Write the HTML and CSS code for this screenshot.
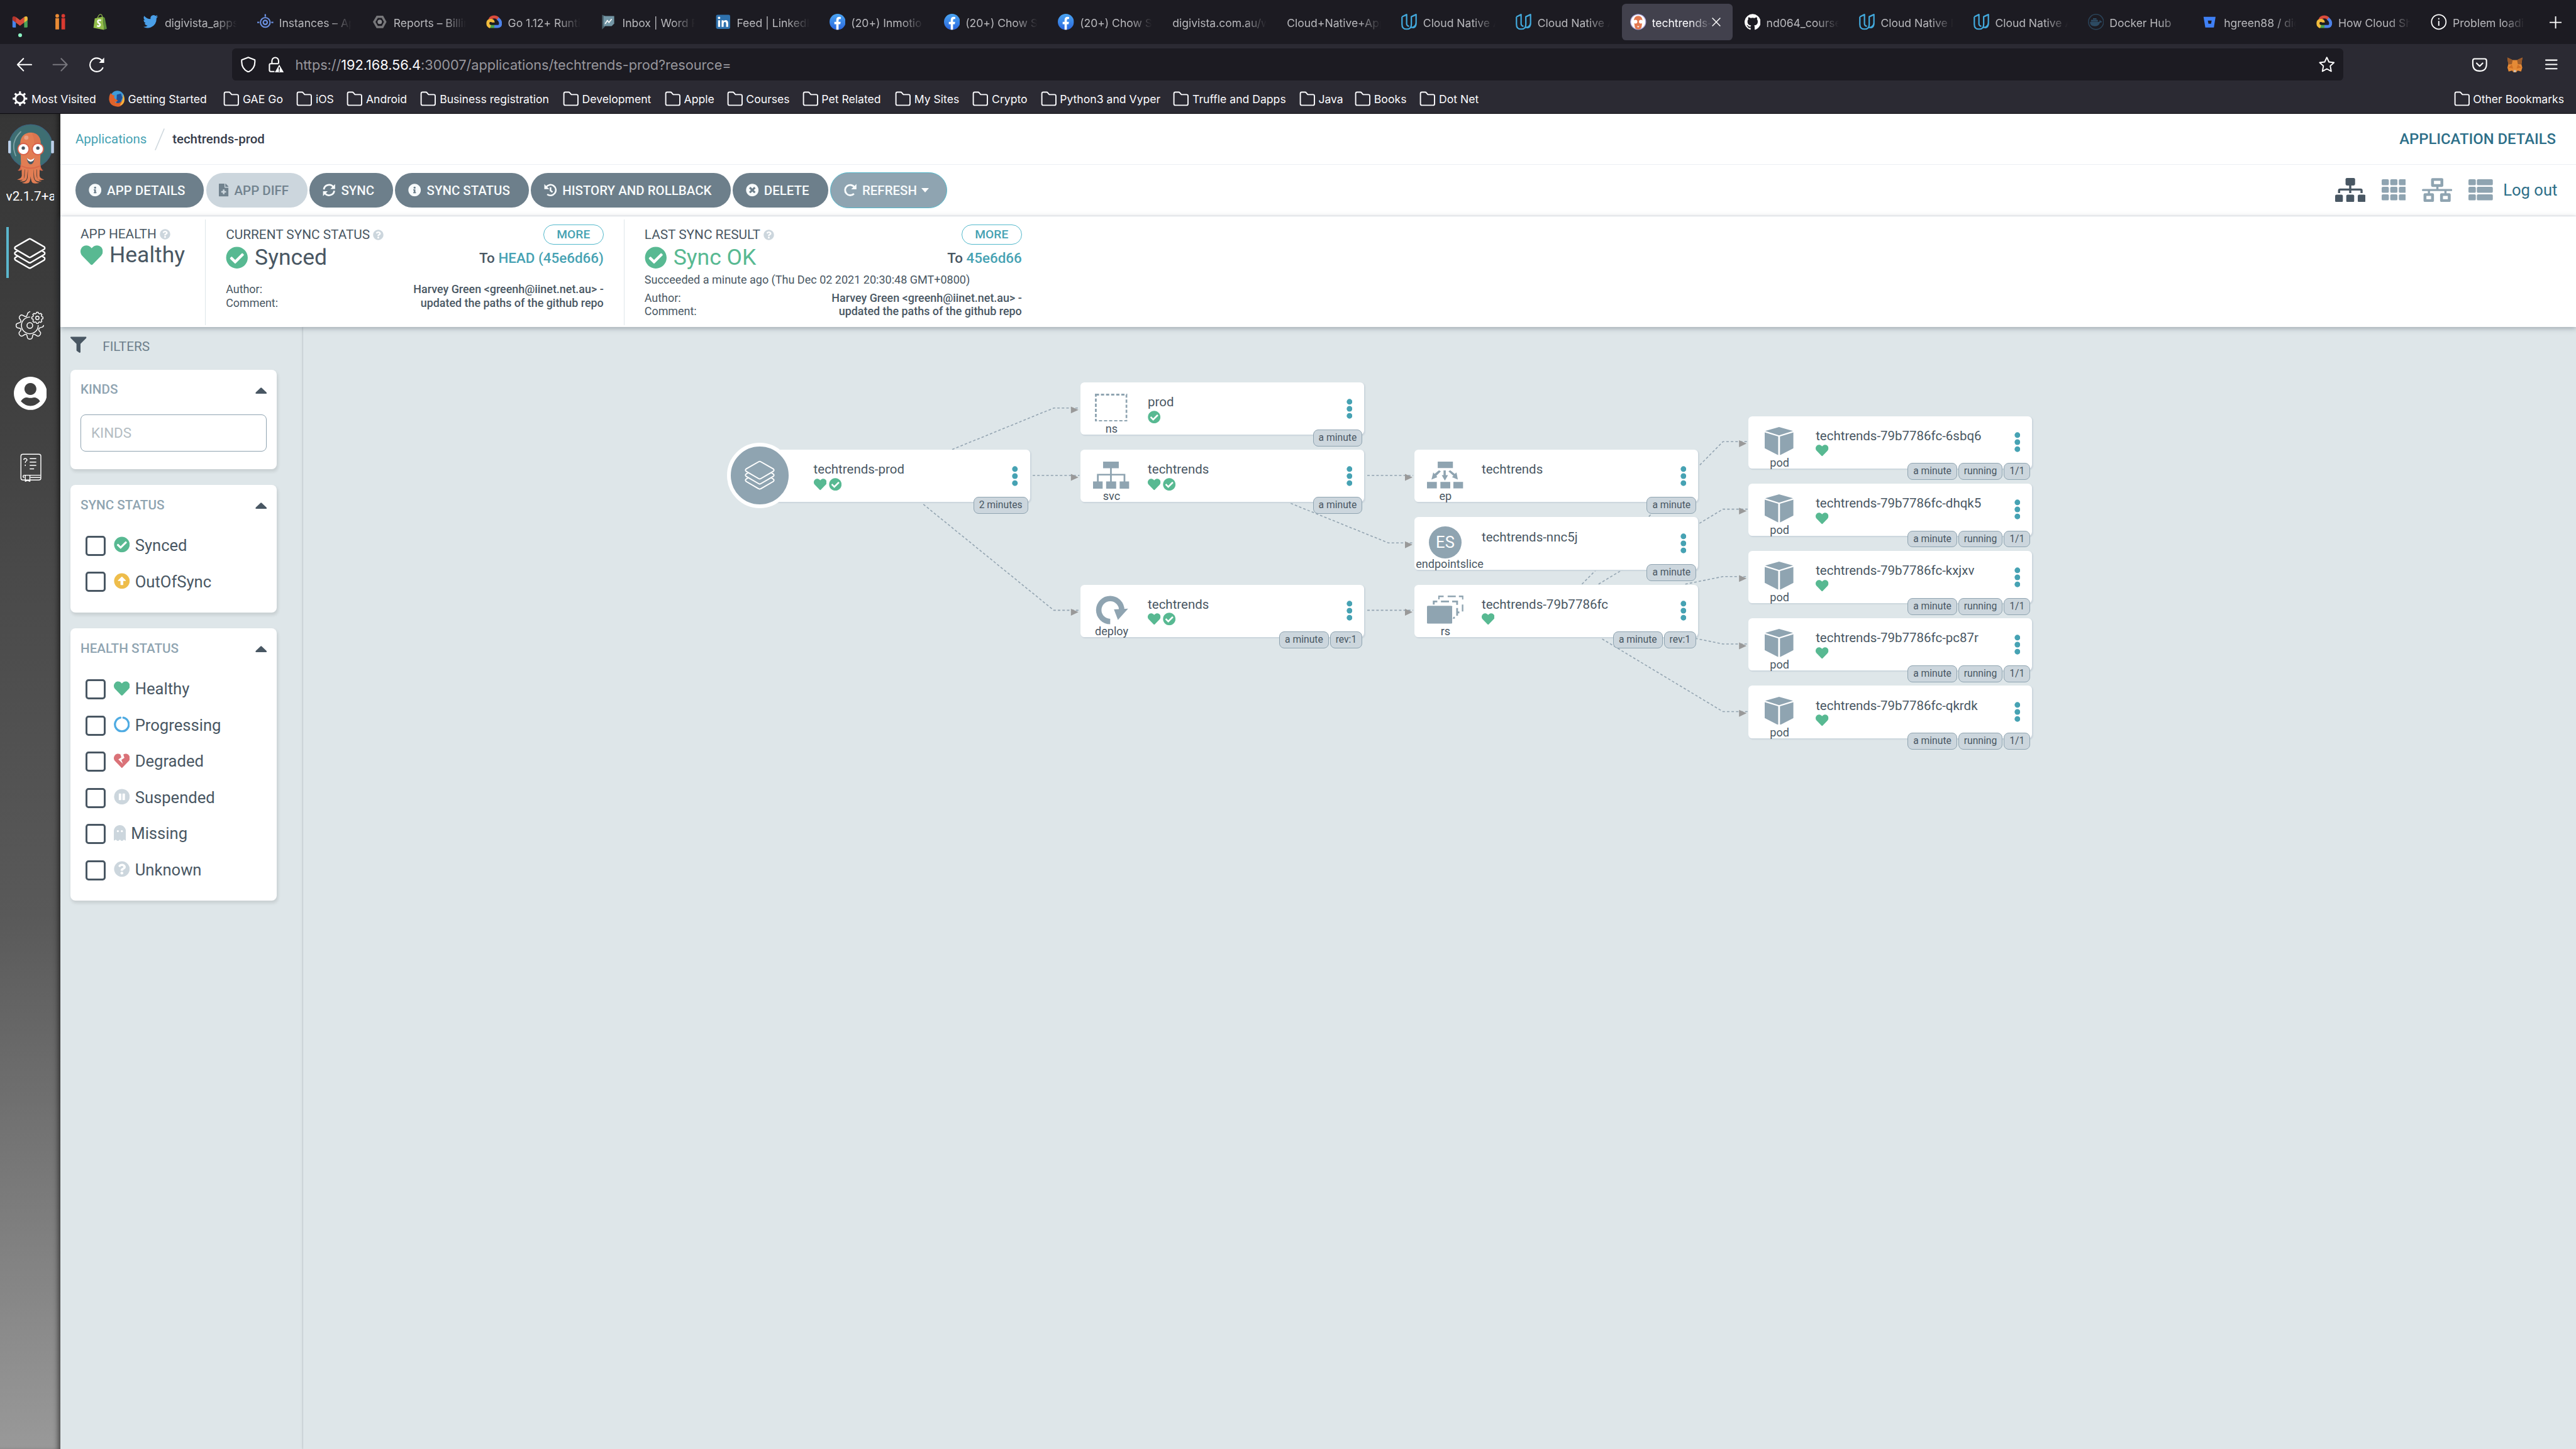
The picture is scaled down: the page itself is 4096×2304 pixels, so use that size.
FILE: index.html
```html
<!DOCTYPE html>
<html lang="en">
<head>
<meta charset="utf-8">
<title>techtrends-prod - Application Details Tree - Argo CD</title>
<link rel="stylesheet" href="styles.css">
</head>
<body>
<svg class="defs" width="0" height="0" aria-hidden="true">
  <defs>
    <linearGradient id="fbg" x1="0" y1="0" x2="0" y2="1"><stop offset="0" stop-color="#4aa5f2"/><stop offset="1" stop-color="#2b66dd"/></linearGradient>
    <symbol id="check" viewBox="0 0 512 512"><path d="M504 256c0 136.967-111.033 248-248 248S8 392.967 8 256 119.033 8 256 8s248 111.033 248 248zM227.314 387.314l184-184c6.248-6.248 6.248-16.379 0-22.627l-22.627-22.627c-6.248-6.249-16.379-6.249-22.628 0L216 308.118l-70.059-70.059c-6.248-6.248-16.379-6.248-22.628 0l-22.627 22.627c-6.248 6.248-6.248 16.379 0 22.627l104 104c6.249 6.249 16.379 6.249 22.628.001z"/></symbol>
    <symbol id="heart" viewBox="0 0 512 512"><path d="M462.3 62.6C407.5 15.9 326 24.3 275.7 76.2L256 96.5l-19.7-20.3C186.1 24.3 104.500 15.900 49.700 62.600c-62.800 53.600-66.100 149.800-9.900 207.900l193.500 199.800c12.500 12.900 32.800 12.900 45.300 0l193.500-199.800c56.300-58.100 53-154.300-9.800-207.900z"/></symbol>
    <symbol id="info" viewBox="0 0 512 512"><path d="M256 8C119.043 8 8 119.083 8 256c0 136.997 111.043 248 248 248s248-111.003 248-248C504 119.083 392.957 8 256 8zm0 110c23.196 0 42 18.804 42 42s-18.804 42-42 42-42-18.804-42-42 18.804-42 42-42zm56 254c0 6.627-5.373 12-12 12h-88c-6.627 0-12-5.373-12-12v-24c0-6.627 5.373-12 12-12h12v-64h-12c-6.627 0-12-5.373-12-12v-24c0-6.627 5.373-12 12-12h64c6.627 0 12 5.373 12 12v100h12c6.627 0 12 5.373 12 12v24z"/></symbol>
    <symbol id="times" viewBox="0 0 512 512"><path d="M256 8C119 8 8 119 8 256s111 248 248 248 248-111 248-248S393 8 256 8zm121.600 313.100c4.700 4.700 4.700 12.300 0 17L338 377.600c-4.700 4.700-12.300 4.700-17 0L256 312l-65.100 65.600c-4.700 4.700-12.300 4.700-17 0L134.400 338c-4.700-4.700-4.700-12.300 0-17l65.600-65-65.600-65.100c-4.700-4.700-4.700-12.300 0-17l39.600-39.600c4.700-4.700 12.300-4.700 17 0l65 65.700 65.100-65.600c4.700-4.700 12.300-4.700 17 0l39.600 39.600c4.700 4.700 4.700 12.300 0 17L312 256l65.600 65.100z"/></symbol>
    <symbol id="question" viewBox="0 0 512 512"><path d="M504 256c0 136.997-111.043 248-248 248S8 392.997 8 256C8 119.083 119.043 8 256 8s248 111.083 248 248zM262.655 90c-54.497 0-89.255 22.957-116.549 63.758-3.536 5.286-2.353 12.415 2.715 16.258l34.699 26.310c5.205 3.947 12.621 3.008 16.665-2.122 17.864-22.658 30.113-35.797 57.303-35.797 20.429 0 45.698 13.148 45.698 32.958 0 14.976-12.363 22.667-32.534 33.976C247.128 238.528 216 254.941 216 296v4c0 6.627 5.373 12 12 12h56c6.627 0 12-5.373 12-12v-1.333c0-28.462 83.186-29.647 83.186-106.667 0-58.002-60.165-102-116.531-102zM256 338c-25.365 0-46 20.635-46 46 0 25.364 20.635 46 46 46s46-20.636 46-46c0-25.365-20.635-46-46-46z"/></symbol>
    <symbol id="up" viewBox="0 0 512 512"><path d="M8 256C8 119 119 8 256 8s248 111 248 248-111 248-248 248S8 393 8 256zm292 116V256h70.900c10.700 0 16.100-13 8.500-20.500L264.500 121.200c-4.700-4.700-12.200-4.700-16.900 0l-115 114.300c-7.600 7.600-2.200 20.500 8.500 20.500H212v116c0 6.600 5.400 12 12 12h64c6.600 0 12-5.400 12-12z"/></symbol>
    <symbol id="broken" viewBox="0 0 512 512"><path d="M473.700 73.800l-2.400-2.500c-46-47-118-51.700-169.600-14.800L336 159.900l-96 64 48 128-144-144 96-64-28.600-86.500C159.700 19.600 87 24 40.700 71.400l-2.400 2.400C-10.400 123.600-12.500 202.900 31 256l212.100 218.600c7.100 7.300 18.600 7.300 25.700 0L481 255.900c43.500-53 41.400-132.300-7.300-182.100z"/></symbol>
    <symbol id="pause" viewBox="0 0 512 512"><path fill-rule="evenodd" d="M256 8a248 248 0 1 0 .1 0zM158 168q0-12 12-12h56q12 0 12 12v184q0 12-12 12h-56q-12 0-12-12zM274 168q0-12 12-12h56q12 0 12 12v184q0 12-12 12h-56q-12 0-12-12z"/></symbol>
    <symbol id="ghost" viewBox="0 0 384 512"><path fill-rule="evenodd" d="M192 0C86 0 0 88 0 194v280c0 14 17 18 27 11l25-18c7-5 16-4 22 2l43 38c6 6 16 6 22 0l41-36c6-7 18-7 24 0l41 36c6 6 16 6 22 0l43-38c6-6 15-7 22-2l25 18c10 7 27 3 27-11V194C384 88 298 0 192 0zM128 160a32 32 0 1 0 .1 0zM256 160a32 32 0 1 0 .1 0z"/></symbol>
    <symbol id="spin" viewBox="0 0 512 512"><path fill="none" stroke="currentColor" stroke-width="66" stroke-linecap="round" d="M208 42A220 220 0 1 0 304 42"/></symbol>
    <symbol id="filter" viewBox="0 0 512 512"><path d="M487.976 0H24.028C2.710 0-8.047 25.866 7.058 40.971L192 225.941V432c0 7.831 3.821 15.170 10.237 19.662l80 55.980C298.020 518.690 320 507.493 320 487.980V225.941l184.947-184.970C520.021 25.896 509.338 0 487.976 0z"/></symbol>
    <symbol id="caret" viewBox="0 0 58 33"><path d="M4 33Q-3 30 3 24L25 3Q29-1 33 3L55 24Q61 30 54 33Z"/></symbol>
    <symbol id="file" viewBox="0 0 384 512"><path fill-rule="evenodd" d="M224 136V0H24C11 0 0 11 0 24v464c0 13 11 24 24 24h336c13 0 24-11 24-24V160H248c-13 0-24-11-24-24zM160 230h64v64h64v60h-64v66h-64v-66H96v-60h64zM384 122v6H256V0h6c6 0 12 3 17 7l98 98c4 4 7 11 7 17z"/></symbol>
    <symbol id="sync" viewBox="0 0 16 16"><path fill="none" stroke="currentColor" stroke-width="2.100" d="M1.500 7.200A6.600 6.600 0 0 1 13.600 4.600M14.500 8.800A6.600 6.600 0 0 1 2.400 11.400"/><path d="M15.500.6v6H9.600zM.5 15.400v-6h5.900z"/></symbol>
    <symbol id="redo" viewBox="0 0 16 16"><path fill="none" stroke="currentColor" stroke-width="2.200" d="M12.400 12.500A6.400 6.400 0 1 1 13 4.400"/><path d="M15.500.3v6.700H8.900z"/></symbol>
    <symbol id="history" viewBox="0 0 16 16"><path fill="none" stroke="currentColor" stroke-width="2" d="M2.600 4.400A6.600 6.600 0 1 1 4 13.200M8.100 4.400v4.200l2.500 2"/><path d="M.4.600v6.200h6.200z"/></symbol>
    <symbol id="layers" viewBox="85 728 190 188"><path class="layer-line" fill="none" stroke="currentColor" vector-effect="non-scaling-stroke" d="M173 737Q180 732 187 737L266 782Q274 790 266 797L187 843Q180 848 173 843L94 797Q86 790 94 782ZM107 806L94 814Q86 821 94 829L173 875Q180 880 187 875L266 829Q274 821 266 814L253 806M107 838L94 846Q86 853 94 861L173 907Q180 912 187 907L266 861Q274 853 266 846L253 838"/></symbol>
    <symbol id="folder" viewBox="0 0 16 16"><path fill="none" stroke="currentColor" stroke-width="1.200" stroke-linejoin="round" d="M2.500 1.600h3.200q.7 0 1.200.6L8.400 4h5.100q1.500 0 1.500 1.500v7.600q0 1.500-1.500 1.500h-11q-1.500 0-1.500-1.500v-10q0-1.500 1.500-1.500z"/></symbol>
    <symbol id="udacity" viewBox="0 0 16 16"><path fill="none" stroke="#42a9dc" stroke-width="1.400" stroke-linejoin="round" d="M.8 2.900L5.400.7v9.200q0 2 2.400 2.600M.8 2.900v7.600q0 4.800 4.700 4.800 4.600 0 4.600-4.800V2.900L14.800.7v8q0 2.800-2 4.100-2 1.400-4 .3M14.800.7v9q0 3.600-3.400 4.200"/></symbol>
    <symbol id="gcp" viewBox="0 0 16 16"><path fill="none" stroke="#d94b3c" stroke-width="3" d="M3.600 6Q4.500 3 8 3t4.400 3"/><path fill="none" stroke="#4d82ea" stroke-width="3" d="M11.500 4.800Q14.300 6.500 14.300 9.600T11 12.600H8"/><path fill="none" stroke="#4ca350" stroke-width="3" d="M8.200 12.600H4.800L3.200 12"/><path fill="none" stroke="#f0bb3d" stroke-width="3" d="M4.300 13Q1.700 12 1.700 9.300T4.900 6.500Q7 6.700 7 8.600"/></symbol>
    <symbol id="facebook" viewBox="0 0 16 16"><circle cx="8" cy="8" r="8" fill="url(#fbg)"/><path fill="#fff" d="M6.700 16v-5.700H4.800V8h1.900V6.200Q6.700 3 9.700 3q.9 0 1.500.2v2H10q-1 0-1 1.100V8h2.100l-.4 2.300H9V16z"/></symbol>
    <symbol id="ns" viewBox="0 0 32.300 28"><rect x=".9" y=".9" width="30.500" height="26.200" fill="none" stroke="currentColor" stroke-width="1.800" stroke-dasharray="3.200 1.860"/></symbol>
    <symbol id="svc" viewBox="898 516 83 140" preserveAspectRatio="none"><path d="M921 516h36v34h-16v30h31v39h-4v-31h-27v31h-4v-31h-26v31h-4v-39h30v-30h-16zM898 619h22v37h-22zM928 619h23v37h-23zM959 619h22v37h-22z"/></symbol>
    <symbol id="deploy" viewBox="0 0 33 28.700"><path fill="none" stroke="currentColor" stroke-width="5.400" d="M15.200 25.800A11.400 11.400 0 1 1 26.600 14.600"/><path d="M18.900 13.800L33 13 22.900 24.200z"/></symbol>
    <symbol id="ep" viewBox="153 278 81 116" preserveAspectRatio="none"><path d="M177 278h34v28h-34zM153 365h22v29h-22zM183 365h22v29h-22zM212 365h22v29h-22zM190 316h5v20h5l-7 24-7-24h4zM180 315l4 5-10 19 2 6-13 10 4-30 3 6zM205 315l-4 5 11 19-3 6 13 10-3-30-4 6z"/></symbol>
    <symbol id="rs" viewBox="153 858 81 122" preserveAspectRatio="none"><rect x="153" y="902" width="56" height="78" rx="3"/><path d="M178 858h12v7h-9v9h-3zM199 858h18v7h-18zM224 858h10v17h-3v-10h-7zM230.500 897h3.500v30h-3.500zM166 880h10v7h-6v10h-4zM184 880h18v7h-18zM209 880h13v18h-4v-11h-9zM218 912h4v15h3v8h-3v10h-4zM212 950h3v8h-5z"/></symbol>
    <symbol id="pod" viewBox="905 128 64 122" preserveAspectRatio="none"><path d="M937 128l31 17-31 19-31-19zM905 151l30 18v81l-30-30zM969 151l-30 18v81l30-30z"/></symbol>
    <symbol id="dots" viewBox="0 0 6 20"><circle cx="3" cy="3" r="2.800"/><circle cx="3" cy="10" r="2.800"/><circle cx="3" cy="17" r="2.800"/></symbol>
  </defs>
</svg>

<header class="browser">
  <div class="tabs">
    <div class="pin"><svg class="fav" viewBox="0 0 16 16"><path fill="#4684ea" d="M.5 3.500l3.400 2.600v7.500H1.500q-1 0-1-1z"/><path fill="#4ba357" d="M15.500 3.500l-3.400 2.600v7.500h2.400q1 0 1-1z"/><path fill="#f0bb3d" d="M12.100 3.200q3.400-1.800 3.400 1.200v1.800l-3.400 2.600z"/><path fill="#b5342b" d="M.5 4.400q0-3 3.400-1.200v5.600L.5 6.200z"/><path fill="#d94b3c" d="M3.900 3.200L8 6.300l4.100-3.100v5.600L8 11.900 3.900 8.800z"/></svg><i class="notice"></i></div>
    <div class="pin"><svg class="fav" viewBox="0 0 16 16"><g fill="#ea8b35"><circle cx="5" cy="2" r="1.800"/><rect x="3.200" y="4.300" width="3.600" height="11.200"/></g><g fill="#d93a30"><circle cx="11" cy="2" r="1.800"/><rect x="9.200" y="4.300" width="3.600" height="11.200"/></g></svg></div>
    <div class="pin"><svg class="fav" viewBox="0 0 16 16"><path fill="none" stroke="#8bb44a" stroke-width=".8" d="M4.800 5Q6 .6 8 .6T9.600 4"/><path fill="#93bd4b" d="M2.300 4.500l8.200-1.700 1 13.100L1 13.900z"/><path fill="#5f8f3b" d="M10.500 2.800l1.800 1.200 2 10.800-2.800 1z"/><path fill="none" stroke="#fff" stroke-width="1.600" d="M8.600 6.600Q5.300 5.600 5.300 7.700q0 1.200 1.300 1.800 1.200.7.900 1.900-.5 1.600-3 .4"/></svg></div>
    <div class="tab"><svg class="fav" viewBox="0 0 16 16"><path fill="#4a9fe8" d="M.6 13q2.700.1 4.200-1.300-2.400-.3-3-2.300h1.300Q.8 8.500.9 6l1.300.4Q.1 4.400 1.400 2q2.500 3 6.300 3.200Q7.300 1.600 10.500 1.200q1.300 0 2.200.9L14.700 1.300 13.400 3l1.800-.4L13.700 4.200q0 6.900-5.700 9.200-3.900 1.400-7.400-.4z"/></svg><span>digivista_apps</span></div>
    <div class="tab"><svg class="fav" viewBox="0 0 16 16"><g fill="none" stroke="#6b90e0"><circle cx="8" cy="8.500" r="4.800" stroke-width="1.300"/><circle cx="8" cy="8.500" r="2" stroke-width="1.400"/><path stroke-width="1.400" d="M0 8.500h2M14 8.500h2M8 .3v2.500"/></g></svg><span>Instances – Ap</span></div>
    <div class="tab"><svg class="fav" viewBox="0 0 16 16"><path fill="none" stroke="#77777a" stroke-width="2.200" d="M5.500 3h5.200l2.800 5-2.800 5.200H5.500L2.500 8z"/><circle cx="8" cy="8" r="2.200" fill="#8a8a8d"/></svg><span>Reports – Billin</span></div>
    <div class="tab"><svg class="fav"><use href="#gcp"/></svg><span>Go 1.12+ Runti</span></div>
    <div class="tab"><svg class="fav" viewBox="0 0 16 16"><path fill="#4b636e" d="M1.500 1l3 1v10.500l-3 3z"/><path fill="#7396a5" d="M3 2.200h10.500v7.500L11 12.200H3z"/><path fill="none" stroke="#fff" d="M4.500 10l2.200-3.400 1.600 2L11 5.200"/></svg><span>Inbox | Word F</span></div>
    <div class="tab"><svg class="fav" viewBox="0 0 16 16"><rect x="1" y="1" width="14" height="14" rx="1.500" fill="#2f72ae"/><path fill="#fff" d="M3 6.400h2V13H3zM6.500 6.400h1.900v.9q.7-1.100 2.100-1.100 2.500 0 2.500 3V13h-2V9.700q0-1.700-1.200-1.700T8.500 9.700V13h-2z"/><circle cx="4" cy="4" r="1.200" fill="#fff"/></svg><span>Feed | LinkedI</span></div>
    <div class="tab"><svg class="fav"><use href="#facebook"/></svg><span>(20+) Inmotio</span></div>
    <div class="tab"><svg class="fav"><use href="#facebook"/></svg><span>(20+) Chow S</span></div>
    <div class="tab"><svg class="fav"><use href="#facebook"/></svg><span>(20+) Chow S</span></div>
    <div class="tab"><span>digivista.com.au/w</span></div>
    <div class="tab"><span>Cloud+Native+App</span></div>
    <div class="tab"><svg class="fav"><use href="#udacity"/></svg><span>Cloud Native A</span></div>
    <div class="tab"><svg class="fav"><use href="#udacity"/></svg><span>Cloud Native A</span></div>
    <div class="tab active"><svg class="fav" viewBox="0 0 16 16"><circle cx="8" cy="8" r="7.500" fill="#fff" stroke="#a9a2d8" stroke-width=".8"/><path fill="#e2774f" d="M3.800 7Q3.800 2 8 2t4.200 5l-.8 6q-.6 2.500-3.400 2.500T4.600 13z"/><circle cx="5.300" cy="7.800" r="1.900" fill="#fff"/><circle cx="10.700" cy="7.800" r="1.900" fill="#fff"/><circle cx="5.300" cy="7.800" r=".7"/><circle cx="10.700" cy="7.800" r=".7"/><path d="M6.800 12.200h2.400L8 13.800z"/></svg><span>techtrends-</span><svg class="close" viewBox="0 0 10 10"><path fill="none" stroke="#fff" stroke-width=".9" d="M1 1l8 8M9 1L1 9"/></svg></div>
    <div class="tab"><svg class="fav" viewBox="0 0 16 16"><path fill="#fff" d="M8 .2a8 8 0 0 0-2.500 15.600c.4 0 .5-.2.500-.4v-1.500c-2 .4-2.600-.6-2.800-1.100-.1-.3-.5-.9-.8-1.200-.3-.1-.7-.5 0-.5.600 0 1.100.6 1.200.8.700 1.200 1.900.9 2.400.7 0-.5.300-.9.500-1.100-1.800-.2-3.600-.9-3.600-3.900 0-.9.300-1.600.8-2.100-.1-.2-.4-1 .1-2.100 0 0 .7-.2 2.200.8a7.500 7.500 0 0 1 4 0c1.500-1 2.200-.8 2.200-.8.500 1.100.2 1.900.1 2.100.5.500.8 1.200.8 2.100 0 3.100-1.900 3.700-3.600 3.900.300.300.500.800.500 1.500v2.400c0 .2.200.5.500.4A8 8 0 0 0 8 .2z"/></svg><span>nd064_course</span></div>
    <div class="tab"><svg class="fav"><use href="#udacity"/></svg><span>Cloud Native F</span></div>
    <div class="tab"><svg class="fav"><use href="#udacity"/></svg><span>Cloud Native A</span></div>
    <div class="tab"><svg class="fav" viewBox="0 0 16 16"><circle cx="8" cy="8" r="7.500" fill="none" stroke="#2a4257"/><path fill="#2d4b63" d="M2 8h9.300q.4-1 .2-1.800Q12.800 6.500 13 7.500h1.300q-.8 1.300-2.300 1.200Q10.500 12.400 6.600 12.400 2 12.400 2 8zM3 6h6.800v1.600H3zM5 4.300h3.500v1.400H5z"/></svg><span>Docker Hub</span></div>
    <div class="tab"><svg class="fav" viewBox="0 0 16 16"><path fill="#3f80f5" d="M1.700 3h12l-1.700 10.600H3.500zM6 6.700l.6 3.200h2.600l.6-3.200z" fill-rule="evenodd"/></svg><span>hgreen88 / dig</span></div>
    <div class="tab"><svg class="fav"><use href="#gcp"/></svg><span>How Cloud Sh</span></div>
    <div class="tab"><svg class="fav" viewBox="0 0 16 16"><circle cx="8" cy="8" r="7.200" fill="none" stroke="#fff" stroke-width="1.100"/><path stroke="#fff" stroke-width="1.200" d="M8 7v4.800M8 4.200v1.500"/></svg><span>Problem loadin</span></div>
    <svg class="plus" viewBox="0 0 12 12"><path fill="none" stroke="#fff" stroke-width="1.200" d="M6 0v12M0 6h12"/></svg>
  </div>
  <div class="toolbar">
    <svg class="tb back" viewBox="0 0 16 16"><path fill="none" stroke="#fff" stroke-width="1.300" stroke-linecap="round" stroke-linejoin="round" d="M7 2L1.200 8 7 14M1.200 8H15"/></svg>
    <svg class="tb fwd" viewBox="0 0 16 16"><path fill="none" stroke="#77767d" stroke-width="1.300" stroke-linecap="round" stroke-linejoin="round" d="M9 2l5.800 6L9 14M14.800 8H1"/></svg>
    <svg class="tb" viewBox="0 0 16 16"><path fill="none" stroke="#fff" stroke-width="1.300" stroke-linecap="round" d="M14 11.200A6.700 6.700 0 1 1 12.800 3.500"/><path fill="#fff" d="M15.400 1v5.200h-5.200z"/></svg>
    <div class="url">
      <svg class="ui" viewBox="0 0 16 16"><path fill="none" stroke="#fff" stroke-width="1.300" stroke-linejoin="round" d="M8 .8l6.500 2.500q.8 8.700-6.500 12Q.7 12 1.500 3.300z"/></svg>
      <svg class="ui lock" viewBox="0 0 16 16"><path fill="none" stroke="#fff" stroke-width="1.300" d="M4 7V4.200a3.300 3.300 0 0 1 6.600 0V7M6.500 14.800H2.800q-1.300 0-1.300-1.300V8.300Q1.500 7 2.800 7h7.600"/><path fill="#fff" d="M11.300 8l4.500 7.800H6.800z"/><path stroke="#1c1b22" stroke-width="1.100" d="M11.300 10.500v2.600M11.300 13.800v1"/></svg>
      <span class="addr">https://<b>192.168.56.4</b>:30007/applications/techtrends-prod?resource=</span>
      <svg class="ui star" viewBox="0 0 16 16"><path fill="none" stroke="#fff" stroke-width="1.200" stroke-linejoin="round" d="M8 .8l2.100 4.500 5 .6-3.700 3.400 1 5.300L8 12.200l-4.400 2.400 1-5.300L.9 5.900l5-.6z"/></svg>
    </div>
    <svg class="tb pocket" viewBox="0 0 16 16"><path fill="none" stroke="#fff" stroke-width="1.300" stroke-linejoin="round" stroke-linecap="round" d="M3 2.200h10q1.800 0 1.800 1.800v3.500q0 6.800-6.800 6.800T1.200 7.500V4Q1.200 2.200 3 2.200zM5 6.500l3 3 3-3"/></svg>
    <svg class="tb fox" viewBox="0 0 16 16"><path fill="#e58a36" d="M.5 1l5.300 2.500h4.400L15.500 1l-1 6.500.9 3.500-1.200 3.800-3.400-.9-1.500 1.700H6.700l-1.500-1.700-3.400.9L.6 11l.9-3.500z"/><path fill="#9a5a2a" d="M.5 1l5.300 2.500-.8 4-3.500.3zM15.500 1l-5.300 2.500.8 4 3.500.3z"/><path fill="#d06f25" d="M5 8l1.300 3.800L1.500 11zM11 8l-1.300 3.800 4.800-.8z"/><path fill="#c9c1ba" d="M6.700 13.500h2.600l-.3 2H7z"/></svg>
    <svg class="tb menu" viewBox="0 0 16 16"><path stroke="#fff" stroke-width="1.300" stroke-linecap="round" d="M2.500 3.500h11M2.500 7.800h11M2.500 12h11"/></svg>
  </div>
  <div class="bookmarks">
    <div><svg viewBox="0 0 16 16"><circle cx="8" cy="8" r="4.500" fill="none" stroke="#fff" stroke-width="1.800"/><path stroke="#fff" stroke-width="2" d="M8 .8v3M8 12.200v3M.8 8h3M12.200 8h3M2.900 2.900L5 5M11 11l2.100 2.100M13.100 2.900L11 5M5 11l-2.100 2.100"/></svg><span>Most Visited</span></div>
    <div><svg viewBox="0 0 16 16"><circle cx="8.500" cy="7" r="6.800" fill="#3f9bd9"/><path fill="#1f4f94" d="M8 4l4-1 1.500 4-2 5-4 1z"/><path fill="#e0622a" d="M2 2.500Q3.500 5 6 4.800 4.500 6.500 6 8t3 1.500Q8 12 5.500 11 8 13.500 11 12t3.500-7Q17 10 14 13.500T7 15.800Q1 14.500.3 9.300 0 5 2 2.500z"/><path fill="#f3b63f" d="M14 3.500q2.500 4 1 8-2 3.500-4 3 3.500-4 3-11z"/></svg><span>Getting Started</span></div>
    <div><svg><use href="#folder"/></svg><span>GAE Go</span></div>
    <div><svg><use href="#folder"/></svg><span>iOS</span></div>
    <div><svg><use href="#folder"/></svg><span>Android</span></div>
    <div><svg><use href="#folder"/></svg><span>Business registration</span></div>
    <div><svg><use href="#folder"/></svg><span>Development</span></div>
    <div><svg><use href="#folder"/></svg><span>Apple</span></div>
    <div><svg><use href="#folder"/></svg><span>Courses</span></div>
    <div><svg><use href="#folder"/></svg><span>Pet Related</span></div>
    <div><svg><use href="#folder"/></svg><span>My Sites</span></div>
    <div><svg><use href="#folder"/></svg><span>Crypto</span></div>
    <div><svg><use href="#folder"/></svg><span>Python3 and Vyper</span></div>
    <div><svg><use href="#folder"/></svg><span>Truffle and Dapps</span></div>
    <div><svg><use href="#folder"/></svg><span>Java</span></div>
    <div><svg><use href="#folder"/></svg><span>Books</span></div>
    <div><svg><use href="#folder"/></svg><span>Dot Net</span></div>
    <div><svg><use href="#folder"/></svg><span>Other Bookmarks</span></div>
  </div>
</header>

<div class="app">
  <nav class="nav">
    <svg class="argo" viewBox="50 50 274 356">
      <circle cx="184" cy="183" r="129" fill="#3e6e72" stroke="#3d6480" stroke-width="5"/>
      <path fill="none" stroke="#7ea3a5" stroke-width="7" stroke-linecap="round" d="M125 97Q60 160 95 240"/>
      <rect x="50" y="150" width="16" height="75" rx="5" fill="#bcd0ea"/><rect x="306" y="150" width="17" height="75" rx="5" fill="#bcd0ea"/>
      <path fill="#d8694a" d="M124 290Q124 320 106 327 120 334 132 322L132 300zM243 290Q243 320 260 327 246 334 235 322L235 300z"/>
      <g fill="#e27d53">
        <path d="M122 170C120 128 148 102 184 102S246 128 244 170L240 310Q240 322 236 322H132Q128 322 127 310z"/>
        <path d="M130 315L131 360Q128 377 103 382 120 387 136 383 146 378 145 362L148 315zM150 315L148 362Q146 385 118 391 138 397 152 389 163 380 163 362L168 315zM168 315L166 370Q163 396 131 402 156 408 170 403 182 396 184 362 186 396 198 403 212 408 237 402 205 396 202 370L200 315zM200 315L205 362Q205 380 216 389 230 397 250 391 222 385 220 362L218 315zM220 315L223 362Q222 378 232 383 248 387 265 382 240 377 237 360L238 315z"/>
      </g>
      <path fill="#d9704c" d="M190 102Q244 108 244 170L240 215 205 180Q208 140 190 102z" opacity=".6"/>
      <path fill="none" stroke="#d9694a" stroke-width="7" d="M128 301Q184 328 240 301"/>
      <circle cx="158" cy="132" r="13" fill="#e9a084"/>
      <circle cx="141" cy="200" r="37" fill="#d8604a"/><circle cx="227" cy="200" r="37" fill="#d8604a"/>
      <circle cx="141" cy="200" r="30" fill="#fff"/><circle cx="227" cy="200" r="30" fill="#fff"/>
      <circle cx="140" cy="194" r="10"/><circle cx="227" cy="194" r="10"/>
      <path d="M161 253Q184 280 207 253 203 290 184 291 165 290 161 253z"/><path fill="#fff" d="M161 253Q184 277 207 253 203 274 184 276 166 274 161 253z"/>
    </svg>
    <div class="version">v2.1.7+a</div>
    <div class="navitem current"><svg class="layers"><use href="#layers"/></svg></div>
    <svg class="gears" viewBox="-88 -88 176 176"><g fill="none" stroke="#fff" stroke-width="5.500" stroke-linejoin="round" stroke-linecap="round"><circle r="17"/><path d="M50 0A50 50 0 1 1 0-50"/><path d="M82 0Q80 10 74 10L59.600 14Q50 22 54.200 30.100L64 42Q66 50 60 58 52 68 42 62L30.100 54.200Q20 50 17.100 59.600L14 74Q11 82 0 82-11 82-14 74L-17.100 59.600Q-20 50-30.100 54.200L-42 62Q-52 68-60 58-66 50-64 42L-54.200 30.100Q-50 22-59.600 17.100L-74 14Q-82 11-82 0-82-11-74-12L-59.600-17.100Q-50-22-54.200-30.100L-62-42Q-66-50-58-58-50-66-42-60L-30.100-54.200Q-20-50-17.100-59.600L-12-74Q-8-80 0-82"/></g><g fill="none" stroke="#fff" stroke-width="12" stroke-linejoin="round" transform="translate(45 -45) scale(.44)"><circle r="23"/><path d="M59.600-17.100L76-11.300V11.300L59.600 17.100 54.200 30.100 61.700 45.700 45.700 61.700 30.100 54.200 17.100 59.600 11.300 76H-11.300L-17.100 59.600-30.100 54.200-45.700 61.700-61.700 45.700-54.200 30.100-59.600 17.100-76 11.300V-11.300L-59.600-17.100-54.200-30.100-61.700-45.700-45.700-61.700-30.100-54.200-17.100-59.600-11.300-76H11.300L17.100-59.600 30.100-54.200 45.700-61.700 61.700-45.700 54.200-30.100z"/></g></svg>
    <svg class="user" viewBox="0 0 100 100"><path fill="#fff" fill-rule="evenodd" d="M50 0a50 50 0 1 0 .1 0zM50 19a18 18 0 1 1-.1 0zM21 74Q30 61 42 63 50 65 58 63 70 61 79 74 66 88 50 88T21 74z"/></svg>
    <svg class="book" viewBox="101 683 107 149" preserveAspectRatio="none"><g fill="none" stroke="#fff" stroke-width="4.500" stroke-linejoin="round"><rect x="105" y="687" width="100" height="134" rx="10"/><path d="M203 796H122Q116 796 116 802T122 808M153 808H203M127 796V828L138 823 150 828V796"/><path d="M149 710H182M149 728H182M149 745H182M149 763H171"/><path d="M119 716Q120 709 127 709T136 716Q136 720 131 723T127 732M127 741V748"/></g></svg>
  </nav>
  <main class="main">
    <div class="crumbs">
      <a>Applications</a>
      <svg class="slash" viewBox="0 0 10 22"><path stroke="#cfd8de" stroke-width="1" d="M9.500.3L.5 21.700"/></svg>
      <strong>techtrends-prod</strong>
      <h1>APPLICATION DETAILS</h1>
    </div>
    <div class="actions">
      <button class="btn"><svg><use href="#info"/></svg><span>APP DETAILS</span></button>
      <button class="btn off"><svg class="narrow"><use href="#file"/></svg><span>APP DIFF</span></button>
      <button class="btn"><svg><use href="#sync"/></svg><span>SYNC</span></button>
      <button class="btn"><svg><use href="#info"/></svg><span>SYNC STATUS</span></button>
      <button class="btn"><svg><use href="#history"/></svg><span>HISTORY AND ROLLBACK</span></button>
      <button class="btn"><svg><use href="#times"/></svg><span>DELETE</span></button>
      <button class="btn focus"><svg><use href="#redo"/></svg><span>REFRESH</span><i class="down"></i></button>
      <div class="views">
        <svg class="wide on" viewBox="230 399 169 144" preserveAspectRatio="none"><rect x="288" y="399" width="53" height="45" rx="8"/><rect x="230" y="498" width="43" height="45" rx="8"/><rect x="292" y="498" width="44" height="45" rx="8"/><rect x="356" y="498" width="43" height="45" rx="8"/><path fill="none" stroke="currentColor" stroke-width="12" d="M314 440V489M252 489V474Q252 468 258 468H371Q377 468 377 474V489"/></svg>
        <svg class="sq" viewBox="487 408 136 126" preserveAspectRatio="none"><g id="thcol"><rect x="487" y="408" width="40" height="36" rx="7"/><rect x="487" y="453" width="40" height="36" rx="7"/><rect x="487" y="498" width="40" height="36" rx="7"/></g><use href="#thcol" x="48"/><use href="#thcol" x="96"/></svg>
        <svg class="wide" viewBox="711 399 169 144" preserveAspectRatio="none"><g fill="none" stroke="currentColor" stroke-width="16" stroke-linejoin="round"><path d="M770 408H822V444H770zM728 498H770V534H728zM820 498H863V534H820z"/><path stroke-width="12" stroke-linecap="round" d="M717 471H874M797 452V471M750 471V490M842 471V490"/></g></svg>
        <svg class="sq" viewBox="969 408 136 126" preserveAspectRatio="none"><rect x="969" y="408" width="41" height="36" rx="7"/><rect x="969" y="453" width="41" height="36" rx="7"/><rect x="969" y="498" width="41" height="36" rx="7"/><rect x="1016" y="408" width="89" height="36" rx="7"/><rect x="1016" y="453" width="89" height="36" rx="7"/><rect x="1016" y="498" width="89" height="36" rx="7"/></svg>
        <a class="logout">Log out</a>
      </div>
    </div>
    <section class="status">
      <div class="cell health">
        <div class="label">APP HEALTH<svg><use href="#question"/></svg></div>
        <div class="value"><svg class="green"><use href="#heart"/></svg><span>Healthy</span></div>
      </div>
      <div class="cell current-sync">
        <div class="row label"><span class="label">CURRENT SYNC STATUS<svg><use href="#question"/></svg></span><a class="more">MORE</a></div>
        <div class="row big"><div class="value"><svg class="green"><use href="#check"/></svg><span>Synced</span></div><div class="to">To <a>HEAD (45e6d66)</a></div></div>
        <div class="meta"><span>Author:</span><b>Harvey Green &lt;greenh@iinet.net.au&gt; -</b><span>Comment:</span><b>updated the paths of the github repo</b></div>
      </div>
      <div class="cell last-sync">
        <div class="row label"><span class="label">LAST SYNC RESULT<svg><use href="#question"/></svg></span><a class="more">MORE</a></div>
        <div class="row big"><div class="value ok"><svg class="green"><use href="#check"/></svg><span>Sync OK</span></div><div class="to">To <a>45e6d66</a></div></div>
        <div class="when">Succeeded a minute ago (Thu Dec 02 2021 20:30:48 GMT+0800)</div>
        <div class="meta"><span>Author:</span><b>Harvey Green &lt;greenh@iinet.net.au&gt; -</b><span>Comment:</span><b>updated the paths of the github repo</b></div>
      </div>
    </section>
    <div class="body">
      <aside class="filters">
        <div class="fhead"><svg><use href="#filter"/></svg><span>FILTERS</span></div>
        <div class="card kinds">
          <div class="chead"><span>KINDS</span><svg><use href="#caret"/></svg></div>
          <div class="input">KINDS</div>
        </div>
        <div class="card sync">
          <div class="chead"><span>SYNC STATUS</span><svg><use href="#caret"/></svg></div>
          <div class="opt"><i></i><svg class="green"><use href="#check"/></svg><span>Synced</span></div>
          <div class="opt"><i></i><svg class="yellow"><use href="#up"/></svg><span>OutOfSync</span></div>
        </div>
        <div class="card hstatus">
          <div class="chead"><span>HEALTH STATUS</span><svg><use href="#caret"/></svg></div>
          <div class="opt"><i></i><svg class="green"><use href="#heart"/></svg><span>Healthy</span></div>
          <div class="opt"><i></i><svg class="blue"><use href="#spin"/></svg><span>Progressing</span></div>
          <div class="opt"><i></i><svg class="red"><use href="#broken"/></svg><span>Degraded</span></div>
          <div class="opt"><i></i><svg class="grey"><use href="#pause"/></svg><span>Suspended</span></div>
          <div class="opt"><i></i><svg class="grey ghost"><use href="#ghost"/></svg><span>Missing</span></div>
          <div class="opt"><i></i><svg class="grey"><use href="#question"/></svg><span>Unknown</span></div>
        </div>
      </aside>
      <div class="canvas">
        <svg class="edges" viewBox="301 325 2259 1115">
          <g fill="none" stroke="#93a4b1" stroke-width="1" stroke-dasharray="2.500 2">
            <path d="M946 446.700L1047 405.500H1072.500M1026 472.500H1072.500M917.400 501.200L1047 606.500H1072.500M1358.500 472.500H1404M1282.400 500.200L1379.500 539.500H1404M1358.500 606.500H1404M1571.900 580.500L1712 438.900H1736.500M1588.400 580.500L1712 506H1736.500M1674.600 580.500L1712 573H1736.500M1680 633.500L1712 640H1736.500M1592 635L1712 707.200H1736.500"/>
          </g>
          <path fill="#999" d="M1064 404l7.500 3.300-7.500 3.500zM1064 471l7.500 3.300-7.500 3.500zM1064 605l7.500 3.300-7.500 3.500zM1396 471l7.500 3.300-7.500 3.500zM1396 538l7.500 3.300-7.500 3.500zM1396 605l7.500 3.300-7.500 3.500zM1728 437.500l7.500 3.300-7.500 3.500zM1728 504.500l7.500 3.300-7.500 3.500zM1728 571.500l7.500 3.300-7.500 3.500zM1728 638.500l7.500 3.300-7.500 3.500zM1728 705.500l7.500 3.300-7.500 3.500z"/>
        </svg>
        <div class="node root" style="left:440.500px;top:122px"><div class="disc"><svg><use href="#layers"/></svg></div><div class="name">techtrends-prod<p><svg><use href="#heart"/></svg><svg><use href="#check"/></svg></p></div><svg class="dots"><use href="#dots"/></svg><div class="tags"><span>2 minutes</span></div></div>
        <div class="node" style="left:772.700px;top:55px"><div class="kind"><svg class="k-ns"><use href="#ns"/></svg><span>ns</span></div><div class="name">prod<p><svg><use href="#check"/></svg></p></div><svg class="dots"><use href="#dots"/></svg><div class="tags"><span>a minute</span></div></div>
        <div class="node" style="left:772.700px;top:122px"><div class="kind"><svg class="k-svc"><use href="#svc"/></svg><span>svc</span></div><div class="name">techtrends<p><svg><use href="#heart"/></svg><svg><use href="#check"/></svg></p></div><svg class="dots"><use href="#dots"/></svg><div class="tags"><span>a minute</span></div></div>
        <div class="node" style="left:772.700px;top:256px"><div class="kind"><svg class="k-deploy"><use href="#deploy"/></svg><span>deploy</span></div><div class="name">techtrends<p><svg><use href="#heart"/></svg><svg><use href="#check"/></svg></p></div><svg class="dots"><use href="#dots"/></svg><div class="tags"><span>a minute</span><span>rev:1</span></div></div>
        <div class="node" style="left:1104.500px;top:122px"><div class="kind"><svg class="k-ep"><use href="#ep"/></svg><span>ep</span></div><div class="name">techtrends</div><svg class="dots"><use href="#dots"/></svg><div class="tags"><span>a minute</span></div></div>
        <div class="node" style="left:1104.500px;top:189px"><div class="kind"><div class="es">ES</div><span class="long">endpointslice</span></div><div class="name">techtrends-nnc5j</div><svg class="dots"><use href="#dots"/></svg><div class="tags"><span>a minute</span></div></div>
        <div class="node" style="left:1104.500px;top:256px"><div class="kind"><svg class="k-rs"><use href="#rs"/></svg><span>rs</span></div><div class="name">techtrends-79b7786fc<p><svg><use href="#heart"/></svg></p></div><svg class="dots"><use href="#dots"/></svg><div class="tags"><span>a minute</span><span>rev:1</span></div></div>
        <div class="node" style="left:1436.500px;top:88.500px"><div class="kind"><svg class="k-pod"><use href="#pod"/></svg><span>pod</span></div><div class="name">techtrends-79b7786fc-6sbq6<p><svg><use href="#heart"/></svg></p></div><svg class="dots"><use href="#dots"/></svg><div class="tags"><span>a minute</span><span>running</span><span>1/1</span></div></div>
        <div class="node" style="left:1436.500px;top:155.500px"><div class="kind"><svg class="k-pod"><use href="#pod"/></svg><span>pod</span></div><div class="name">techtrends-79b7786fc-dhqk5<p><svg><use href="#heart"/></svg></p></div><svg class="dots"><use href="#dots"/></svg><div class="tags"><span>a minute</span><span>running</span><span>1/1</span></div></div>
        <div class="node" style="left:1436.500px;top:222.500px"><div class="kind"><svg class="k-pod"><use href="#pod"/></svg><span>pod</span></div><div class="name">techtrends-79b7786fc-kxjxv<p><svg><use href="#heart"/></svg></p></div><svg class="dots"><use href="#dots"/></svg><div class="tags"><span>a minute</span><span>running</span><span>1/1</span></div></div>
        <div class="node" style="left:1436.500px;top:289.500px"><div class="kind"><svg class="k-pod"><use href="#pod"/></svg><span>pod</span></div><div class="name">techtrends-79b7786fc-pc87r<p><svg><use href="#heart"/></svg></p></div><svg class="dots"><use href="#dots"/></svg><div class="tags"><span>a minute</span><span>running</span><span>1/1</span></div></div>
        <div class="node" style="left:1436.500px;top:356.500px"><div class="kind"><svg class="k-pod"><use href="#pod"/></svg><span>pod</span></div><div class="name">techtrends-79b7786fc-qkrdk<p><svg><use href="#heart"/></svg></p></div><svg class="dots"><use href="#dots"/></svg><div class="tags"><span>a minute</span><span>running</span><span>1/1</span></div></div>
      </div>
    </div>
  </main>
</div>
</body>
</html>
```
FILE: styles.css
```css
* { box-sizing: border-box; }
html { overflow: hidden; background: #dee6e9; }
body {
  margin: 0;
  zoom: 1.6;
  width: 2560px;
  height: 1440px;
  overflow: hidden;
  display: flex;
  flex-direction: column;
  font-family: Roboto, "Liberation Sans", sans-serif;
  color: #495763;
}
svg { display: block; flex: none; fill: currentColor; }
.defs { position: absolute; }
.layer-line { stroke-width: var(--sw); }

/* Browser chrome */
.browser {
  flex: none;
  height: 113px;
  background: #2b2a33;
  border-bottom: 1px solid #0c0b10;
  font-family: Inter, "Liberation Sans", sans-serif;
  color: #fbfbfe;
}
.tabs { display: flex; height: 44px; background: #1c1b22; padding-left: 0; align-items: center; }
.pin { width: 40px; height: 44px; padding: 14px 0 0 12px; position: relative; }
.pin:nth-child(3) { width: 52px; }
.fav { width: 16px; height: 16px; }
.notice { position: absolute; left: 18px; top: 33px; width: 4px; height: 4px; border-radius: 50%; background: #8cf5c4; }
.tab {
  width: 109.710px;
  height: 36px;
  margin: 0 2px;
  padding: 0 8px;
  border-radius: 4px;
  display: flex;
  align-items: center;
  gap: 5.700px;
  color: #b8b8bc;
  font-size: 11px;
}
.tab span {
  flex: 1;
  min-width: 0;
  overflow: hidden;
  white-space: nowrap;
  line-height: 20px;
  padding-top: 2px;
  letter-spacing: -.03px;
  -webkit-mask-image: linear-gradient(to left, transparent, #000 22px);
  mask-image: linear-gradient(to left, transparent, #000 22px);
}
.tab.active { background: #42414d; color: #fbfbfe; padding-right: 11px; }
.tab.active span { margin-right: -6px; }
.close { width: 10px; height: 10px; }
.plus { width: 12px; height: 12px; margin-left: 14px; margin-top: 1px; }

.toolbar { display: flex; align-items: center; height: 40px; padding: 0 16px; }
.tb { width: 16px; height: 16px; margin-right: 20px; }
.url { width: 2098px; height: 32px; margin-left: 106.500px; background: #1c1b22; border-radius: 4px; display: flex; align-items: center; padding: 0 8px; }
.ui { width: 16px; height: 16px; }
.lock { margin-left: 11.500px; }
.addr { margin-left: 11.500px; font-size: 13.600px; line-height: 20px; color: #97969c; flex: 1; letter-spacing: -.04px; padding-top: 1.200px; }
.addr b { font-weight: 400; color: #fbfbfe; }
.pocket { margin-left: 128px; margin-right: 19px; }
.menu { margin-right: 0; }

.bookmarks {
  display: grid;
  height: 28px;
  padding-left: 12px;
  grid-template-columns: 96px 114px 72.500px 50px 73.300px 141.500px 101.300px 61.700px 75px 92.100px 77.100px 67.600px 131.800px 125.200px 55.300px 64.500px 1027.600px auto;
  font-size: 11px;
}
.bookmarks div { display: flex; align-items: center; gap: 3.200px; white-space: nowrap; }
.bookmarks svg { width: 16px; height: 16px; }
.bookmarks span { line-height: 20px; padding-top: 1px; }

/* Application shell */
.app { flex: 1; display: flex; min-height: 0; }
.nav {
  width: 60px;
  flex: none;
  background: linear-gradient(to bottom, #363636 0%, #3f3f3f 20%, #4b4b4b 37%, #595959 60%, #999 100%);
  box-shadow: inset -5px 0 5px -3px rgba(0, 0, 0, .55);
  display: flex;
  flex-direction: column;
  align-items: flex-start;
}
.argo { width: 45.700px; height: 59.300px; margin: 10.300px 0 0 8.300px; }
.version { width: 48px; margin: .6px 0 0 6px; height: 26.400px; line-height: 24px; font-size: 13px; color: #fff; overflow: hidden; white-space: nowrap; }
.navitem { width: 54px; height: 51px; margin: 15.900px 0 0 6px; border-left: 3px solid #5bb6cc; padding: 11px 0 0 5.200px; }
.layers { width: 31.700px; height: 31.300px; color: #fff; --sw: 1.500px; }
.gears { width: 29.300px; height: 29.300px; margin: 32px 0 0 15.300px; }
.user { width: 33px; height: 33px; margin: 36.500px 0 0 13.500px; }
.book { width: 21.200px; height: 28.500px; margin: 43.300px 0 0 20.200px; }

.main { flex: 1; min-width: 0; display: flex; flex-direction: column; background: #fff; }
.crumbs { display: flex; align-items: center; height: 51px; flex: none; border-bottom: 1px solid #eceff3; padding: 0 20px 0 15px; font-size: 12.800px; line-height: 20px; }
.crumbs a { color: #46a2b3; }
.slash { width: 10px; height: 22px; margin: 0 7.500px 0 8px; }
.crumbs strong { font-weight: 500; color: #363c4a; }
.crumbs h1 { margin: 0 0 0 auto; font-size: 14.900px; font-weight: 500; color: #2d6f89; }

.actions { display: flex; align-items: center; gap: 2px; height: 51px; flex: none; border-bottom: 1px solid #eceff3; padding: 0 18.500px 0 15px; }
.btn {
  height: 34px;
  border: 0;
  border-radius: 17px;
  background: #6d7f8b;
  color: #f8fbfc;
  font: 500 12.800px/20px Roboto, sans-serif;
  display: flex;
  align-items: center;
  gap: 5.500px;
  padding: 0 18.800px 0 13px;
  white-space: nowrap;
}
.btn svg { width: 12.800px; height: 12.800px; }
.btn svg.narrow { width: 9.600px; }
.btn.off { background: #ccd6dd; color: #71828e; }
.btn.focus { height: 36px; border: 1px solid #54b9cc; border-radius: 18px; background: #8fa4b1; padding: 0 17.500px 0 13px; }
.down { width: 0; height: 0; border: 4px solid transparent; border-top: 4.500px solid #fff; border-bottom: 0; margin-left: -1px; }
.views { margin-left: auto; display: flex; align-items: center; gap: 16px; color: #8fa4b1; margin-top: -1px; }
.wide { width: 30.200px; height: 24px; }
.sq { width: 24.200px; height: 21px; }
.on { color: #495763; }
.logout { font-size: 16px; line-height: 24px; color: #2d6f89; margin-left: -5.600px; }

.status { display: flex; height: 110px; flex: none; padding: 3px 0 2px; box-shadow: 0 1px 5px rgba(73, 87, 99, .45); position: relative; background: #fff; }
.cell { border-right: 1px solid #dee6e9; padding-left: 20px; }
.health { width: 144.500px; padding-top: 4.400px; }
.current-sync { width: 416px; padding: 5px 20px 0; }
.last-sync { width: 415px; padding: 5px 20px 0; border: 0; }
.label { font-size: 13px; line-height: 20px; display: flex; align-items: center; }
.label svg { width: 10.600px; height: 10.600px; color: #ccd6dd; margin: 1px 0 0 3.200px; }
.row { display: flex; justify-content: space-between; align-items: center; height: 20px; }
.row.big { height: 26px; }
.value { font-size: 22.200px; line-height: 22px; display: flex; align-items: center; gap: 6.500px; }
.value svg { width: 22.200px; height: 22.200px; }
.ok, .green { color: #58b992; }
.health .value { height: 22px; }
.more { width: 60px; height: 20px; border: 1px solid #54b9cc; border-radius: 10px; font-size: 12px; font-weight: 500; line-height: 18.500px; text-align: center; color: #46a2b3; }
.to { font-size: 14px; font-weight: 500; line-height: 20px; }
.to a { color: #46a2b3; }
.meta { display: grid; grid-template-columns: auto auto; justify-content: space-between; margin-top: 11.800px; font-size: 11.200px; line-height: 13.300px; }
.meta b { font-weight: 500; text-align: right; }
.when { margin-top: 1px; font-size: 11.270px; line-height: 16px; white-space: nowrap; }
.last-sync .meta { margin-top: 3.500px; }

.body { flex: 1; display: flex; background: #dee6e9; min-height: 0; }
.filters { width: 241px; flex: none; padding: 9.500px 25px 0 10px; border-right: 1px solid #cdd7dc; }
.fhead { display: flex; height: 16.500px; margin-bottom: 16.400px; font-size: 13px; line-height: 20px; color: #6d7f8b; }
.fhead svg { width: 16px; height: 16.500px; color: #495763; margin-right: 16px; }
.card { background: #fff; border-radius: 5px; box-shadow: 1px 2px 3px rgba(0, 0, 0, .1); padding: 9.600px 10px 0; margin-bottom: 16px; width: 205px; }
.chead { display: flex; justify-content: space-between; align-items: center; height: 20px; font-size: 12.900px; font-weight: 500; color: #8fa4b1; }
.chead svg { width: 11.500px; height: 6.400px; color: #495763; margin-top: 2px; }
.kinds { height: 98.600px; }
.sync { height: 126.600px; }
.hstatus { height: 270.300px; }
.input { margin-top: 15px; height: 36.800px; border: 1px solid #8fa4b1; border-radius: 5px; padding: 0 10px; font-size: 14px; line-height: 35px; color: #b3bcc2; }
.opt { height: 36px; display: flex; align-items: center; padding-left: 5px; font-size: 16px; }
.chead + .opt { margin-top: 12.800px; }
.opt i { width: 20px; height: 20px; border: 2px solid #495763; border-radius: 3px; margin-right: 8px; }
.opt svg { width: 16px; height: 16px; margin: -2px 5.200px 0 0; }
.opt span { margin-top: -1px; }
.opt svg.ghost { width: 12px; }
.yellow { color: #eebd4b; }
.blue { color: #4fabe2; }
.red { color: #da7278; }
.grey { color: #ccd6dd; }

/* Resource graph */
.canvas { flex: 1; position: relative; box-shadow: -1px 0 2px rgba(0, 0, 0, .06); }
.edges { position: absolute; left: 0; top: 0; width: 2259px; height: 1115px; }
.node { position: absolute; width: 282px; height: 52px; background: #fff; border-radius: 4px; box-shadow: 1px 1px 1px #ccd6dd; }
.kind { position: absolute; left: 0; top: 0; width: 61.500px; height: 52px; display: flex; flex-direction: column; align-items: center; font-size: 11.300px; line-height: 14px; white-space: nowrap; }
.kind svg { color: #8fa4b1; }
.kind span { position: absolute; top: 39.500px; left: 31px; transform: translateX(-50%); }
.kind span.long { left: 1.500px; transform: none; }
.k-ns { width: 32.300px; height: 28px; margin-top: 11px; }
.k-svc, .k-ep { width: 36px; height: 26.800px; margin-top: 11.700px; }
.k-deploy { width: 33px; height: 28.700px; margin-top: 11px; }
.k-rs { width: 36.200px; height: 28px; margin-top: 11px; }
.k-pod { width: 28.600px; height: 28px; margin-top: 10.800px; }
.es { width: 32px; height: 32px; margin-top: 9px; border-radius: 50%; background: #8fa4b1; color: #fff; font-size: 16px; line-height: 32px; text-align: center; }
.name { position: absolute; left: 67px; top: 9.500px; font-size: 12.800px; line-height: 20px; white-space: nowrap; }
.name p { margin: -1.500px 0 0; display: flex; gap: 2.200px; }
.name p svg { width: 12.800px; height: 12.800px; color: #58b992; }
.dots { position: absolute; right: 11.800px; top: 16px; width: 6px; height: 20px; color: #46a2b3; }
.tags { position: absolute; right: 1.800px; top: 46.700px; display: flex; gap: 1.200px; }
.tags span { height: 16.800px; border: 1px solid #8fa4b1; border-radius: 5px; background: #ccd6dd; font-size: 9.800px; line-height: 15px; padding: 0 5px; white-space: nowrap; }
.disc { position: absolute; left: -19px; top: -7px; width: 65px; height: 65px; border: 4px solid #fff; border-radius: 50%; background: #8fa4b1; padding: 13.500px 13.500px; }
.disc svg { width: 30px; height: 29.600px; color: #fff; --sw: 1.200px; }
```
